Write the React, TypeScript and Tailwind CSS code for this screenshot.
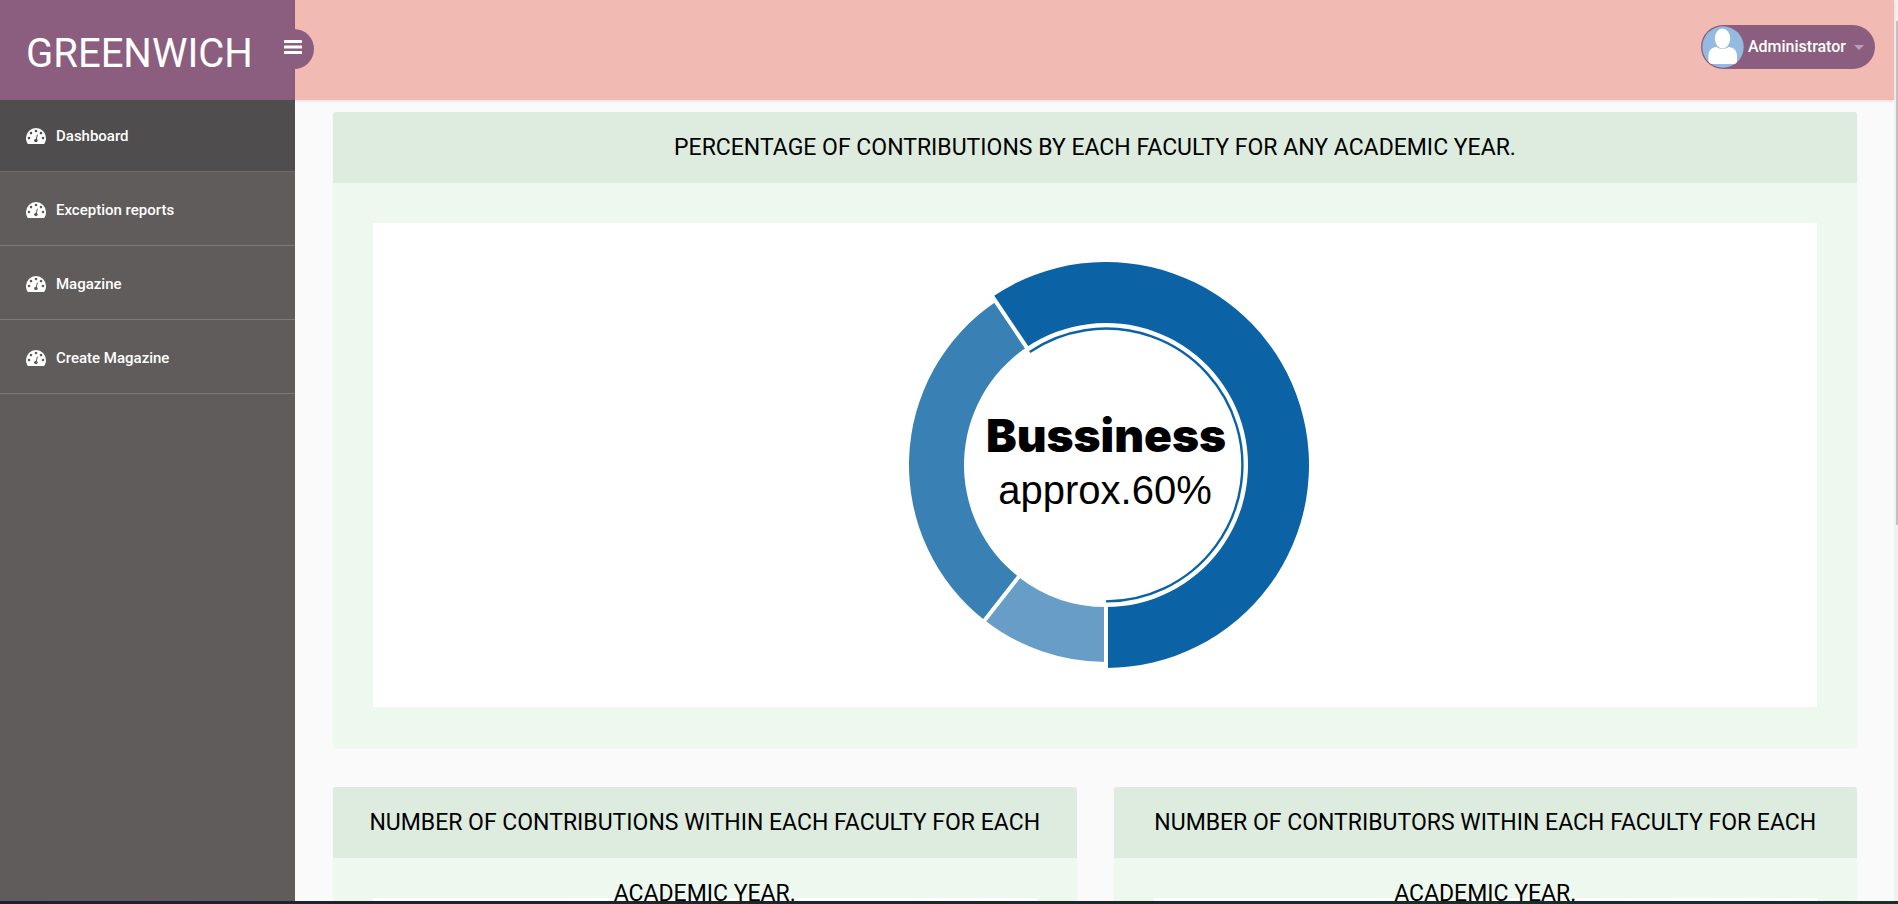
const navItems = ["Dashboard", "Exception reports", "Magazine", "Create Magazine"];

const CX = 206;
const CY = 206;

function point(radius: number, degrees: number) {
  const a = (degrees * Math.PI) / 180;
  return `${(CX + radius * Math.sin(a)).toFixed(2)} ${(CY - radius * Math.cos(a)).toFixed(2)}`;
}

// Angles run clockwise from twelve o'clock.
function ringSlice(inner: number, outer: number, from: number, to: number) {
  const large = to - from > 180 ? 1 : 0;
  return `M${point(outer, from)}A${outer} ${outer} 0 ${large} 1 ${point(outer, to)}L${point(inner, to)}A${inner} ${inner} 0 ${large} 0 ${point(inner, from)}Z`;
}

function DonutChart() {
  return (
    <svg viewBox="0 0 412 412" className="h-[412px] w-[412px]" role="img" aria-label="Contributions by faculty">
      <path d={ringSlice(142, 203, -34, 180)} fill="#0b62a4" />
      <path d={ringSlice(142, 197, 180, 218)} fill="#679dc6" />
      <path d={ringSlice(142, 197, 218, 326)} fill="#3980b5" />
      <path
        d={`M${point(140, -34)}L${point(206, -34)}M${point(140, 180)}L${point(206, 180)}M${point(140, 218)}L${point(206, 218)}`}
        stroke="#fff"
        strokeWidth="4"
      />
      <path
        d={`M${point(136.4, -34)}A136.4 136.4 0 1 1 ${point(136.4, 180)}`}
        fill="none"
        stroke="#0b62a4"
        strokeWidth="2.4"
      />
      <text x="206" y="193" textAnchor="middle" className="fill-black font-['Arial_Black','Inter',sans-serif] text-[46px] font-black">
        Bussiness
      </text>
      <text x="205" y="245" textAnchor="middle" className="fill-black font-['Liberation_Sans',sans-serif] text-[40px]">
        approx.60%
      </text>
    </svg>
  );
}

function GaugeIcon() {
  return (
    <svg viewBox="0 0 20 18" className="h-[18px] w-5" aria-hidden="true">
      <mask id="gauge">
        <path d="M1.900 16C.7 14.300 0 12.200 0 10a10 10 0 0 1 20 0c0 2.200-.7 4.300-1.900 6z" fill="#fff" stroke="none" />
        <circle cx="3" cy="10" r="1.300" />
        <circle cx="5" cy="5.100" r="1.300" />
        <circle cx="10" cy="3" r="1.300" />
        <circle cx="15" cy="5.100" r="1.300" />
        <circle cx="17" cy="10" r="1.300" />
        <circle cx="9.900" cy="12.500" r="1.800" />
        <path d="M10.100 12.200L11.300 7" stroke="#000" strokeWidth="1" strokeLinecap="round" />
      </mask>
      <rect width="20" height="16" rx="1" fill="currentColor" mask="url(#gauge)" />
    </svg>
  );
}

function Card({ title, children }: { title: string; children?: React.ReactNode }) {
  return (
    <section className="min-w-0 rounded-[3px] bg-[#edf9ef] shadow-[0_1px_2px_rgba(0,0,0,0.04)]">
      <h2 className="relative h-[71px] rounded-t-[3px] bg-[#ddecdf] px-8 text-center text-[23px] leading-[71px] text-black uppercase">
        {title}
      </h2>
      <div className="p-10">
        <div className="flex min-h-[484px] items-center justify-center bg-white pl-[22px]">{children}</div>
      </div>
    </section>
  );
}

export default function App() {
  return (
    <div className="relative flex h-screen overflow-hidden bg-[#fafafa] font-['Roboto',sans-serif]">
      <aside className="flex w-[295px] shrink-0 flex-col bg-[#605c5b]">
        <div className="relative flex h-[100px] shrink-0 items-center bg-[#8b5d7e] pl-[26px]">
          <a href="#" className="pt-2 text-[40px] leading-none text-white">GREENWICH</a>
          <button
            type="button"
            aria-label="Toggle menu"
            className="absolute top-[29px] right-[-19px] z-20 flex size-10 items-center justify-center rounded-full bg-[#8b5d7e] pr-0.5 pb-1 text-white"
          >
            <svg viewBox="0 0 18 14" className="h-3.5 w-[18px]" fill="currentColor" aria-hidden="true">
              <rect width="18" height="2.900" rx="0.500" />
              <rect y="5.500" width="18" height="2.900" rx="0.500" />
              <rect y="11" width="18" height="2.900" rx="0.500" />
            </svg>
          </button>
        </div>
        <nav>
          {navItems.map((label, i) => (
            <a
              key={label}
              href="#"
              className={
                i === 0
                  ? "flex h-[72px] items-center gap-2.5 border-b border-[#6f6b6b] bg-[#4f4d4d] pt-0.5 pl-[26px] text-[15px] font-medium text-white"
                  : "flex h-[74px] items-center gap-2.5 border-b border-[#7c7979] pt-1 pl-[26px] text-[15px] font-medium text-white"
              }
            >
              <GaugeIcon />
              {label}
            </a>
          ))}
        </nav>
      </aside>

      <div className="flex min-w-0 flex-1 flex-col">
        <header className="z-10 flex h-[100px] shrink-0 items-center justify-end bg-[#f1bbb4] pr-[19px] pb-1.5 shadow-[0_1px_3px_rgba(0,0,0,0.12)]">
          <button
            type="button"
            className="flex h-11 items-center rounded-full bg-[#8b5d7e] pr-[11px] pl-px text-[16px] font-medium text-white"
          >
            <svg viewBox="0 0 42 42" className="mr-1 size-[42px]" aria-hidden="true">
              <clipPath id="avatar"><circle cx="21" cy="21" r="20.7" /></clipPath>
              <g clipPath="url(#avatar)">
                <rect width="42" height="42" fill="#94bbdf" />
                <ellipse cx="20.500" cy="12.500" rx="7.700" ry="10" fill="#fff" />
                <path d="M6.500 36v-6c0-6 3-8.500 8-9 3.500 2.500 8.500 2.500 12 0 5 .5 8.500 3 8.500 9v6c0 1-1 2-2 2H8.500c-1 0-2-1-2-2z" fill="#fff" />
              </g>
            </svg>
            Administrator
            <svg viewBox="0 0 10 5" className="ml-2 h-[5px] w-2.5" aria-hidden="true">
              <path d="M0 0h10L5 5z" fill="#b9a0b8" />
            </svg>
          </button>
        </header>
        <main className="grid grid-cols-2 gap-x-[37px] gap-y-10 pt-3 pr-[37px] pl-[38px]">
          <div className="col-span-2 min-w-0">
            <Card title="Percentage of contributions by each faculty for any academic year.">
              <DonutChart />
            </Card>
          </div>
          <Card title="Number of contributions within each faculty for each academic year." />
          <Card title="Number of contributors within each faculty for each academic year." />
        </main>
      </div>

      <div className="w-1 shrink-0 bg-[#f1f1f1] pt-[21px] pl-0.5" aria-hidden="true">
        <div className="h-[504px] bg-[#c1c1c1]" />
      </div>
      <div className="absolute inset-x-0 bottom-0 z-30 h-[3px] bg-linear-to-r from-[#211f2c] to-[#16302a]" aria-hidden="true" />
    </div>
  );
}
